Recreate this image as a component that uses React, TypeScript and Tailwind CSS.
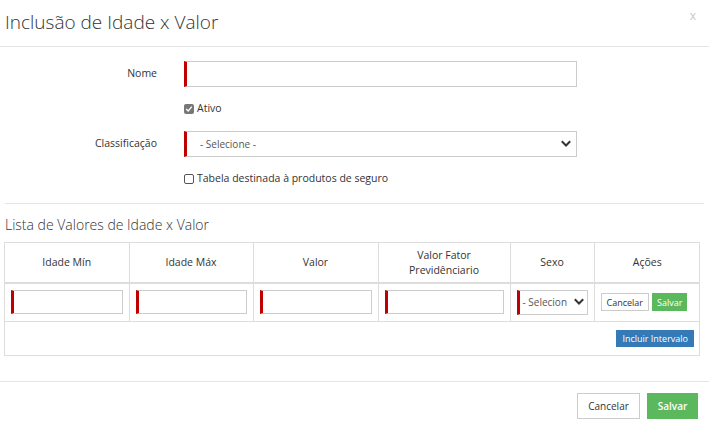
import { useState } from 'react';

function Chevron({ className = '' }: { className?: string }) {
  return (
    <svg viewBox="0 0 10 10" className={className} fill="none">
      <polyline points="1.5,3 5,6.5 8.5,3" stroke="#333" strokeWidth="2" strokeLinecap="square" />
    </svg>
  );
}

function ReqInput({ className = '' }: { className?: string }) {
  return (
    <input
      type="text"
      className={`h-[24px] border border-[#ccc] border-l-[3px] border-l-[#c00000] bg-white outline-none ${className}`}
    />
  );
}

export default function App() {
  const [ativo, setAtivo] = useState(true);
  const [seguro, setSeguro] = useState(false);

  const cols = [
    { label: 'Idade Mín', w: 'w-[124px]' },
    { label: 'Idade Máx', w: 'w-[124px]' },
    { label: 'Valor', w: 'w-[125px]' },
    { label: 'Valor Fator Previdênciario', w: 'w-[132px]' },
    { label: 'Sexo', w: 'w-[84px]' },
    { label: 'Ações', w: 'w-[106px]' },
  ];

  return (
    <div className="w-[709px] h-[429px] bg-white text-[#333] font-['Open_Sans',sans-serif] overflow-hidden">
      {/* Header */}
      <div className="h-[47px] border-b border-[#e5e5e5] flex items-center justify-between pl-[5px] pr-[13px]">
        <h4 className="text-[19px] font-light text-[#333] leading-none pb-[2px]">Inclusão de Idade x Valor</h4>
        <span className="text-[12px] text-[#c8c8c8] leading-none -mt-[15px]">x</span>
      </div>

      {/* Form */}
      <div className="pt-[14px]">
        <div className="flex items-center h-[26px]">
          <label className="w-[157px] text-right text-[10.5px] text-[#333]">Nome</label>
          <ReqInput className="ml-[27px] w-[393px] h-[26px]" />
        </div>

        <div className="flex items-center h-[14px] mt-[15px] ml-[184px] gap-[3px] text-[10.5px]">
          <button
            onClick={() => setAtivo(!ativo)}
            className={`w-[10px] h-[10px] rounded-[2px] flex items-center justify-center ${ativo ? 'bg-[#777]' : 'border border-[#777]'}`}
          >
            {ativo && (
              <svg viewBox="0 0 10 10" className="w-[8px] h-[8px]">
                <polyline points="1.5,5 4,7.5 8.5,2" fill="none" stroke="#fff" strokeWidth="1.6" />
              </svg>
            )}
          </button>
          <span>Ativo</span>
        </div>

        <div className="flex items-center h-[26px] mt-[15px]">
          <label className="w-[157px] text-right text-[10.5px] text-[#333]">Classificação</label>
          <div className="ml-[27px] w-[393px] h-[26px] border border-[#ccc] border-l-[3px] border-l-[#c00000] flex items-center justify-between pl-[13px] pr-[5px]">
            <span className="text-[10px] text-[#555]">- Selecione -</span>
            <Chevron className="w-[10px] h-[10px]" />
          </div>
        </div>

        <div className="flex items-center h-[14px] mt-[15px] ml-[184px] gap-[3px] text-[10.5px]">
          <button
            onClick={() => setSeguro(!seguro)}
            className={`w-[10px] h-[10px] rounded-[2px] border ${seguro ? 'bg-[#777] border-[#777]' : 'border-[#555] bg-white'}`}
          />
          <span>Tabela destinada à produtos de seguro</span>
        </div>

        <div className="mx-[5px] mt-[17px] border-t border-[#e5e5e5]" />

        <h4 className="ml-[5px] mt-[11px] text-[14px] font-light leading-[20px] text-[#333]">Lista de Valores de Idade x Valor</h4>

        {/* Table */}
        <div className="ml-[4px] mt-[7px] w-[696px] border border-[#ddd]">
          <table className="w-full border-collapse table-fixed text-[10.5px]">
            <thead>
              <tr className="h-[40px] border-b-2 border-[#ddd]">
                {cols.map((c, i) => (
                  <th
                    key={c.label}
                    className={`${c.w} font-normal text-center leading-[15px] px-[6px] ${i < cols.length - 1 ? 'border-r border-[#ddd]' : ''}`}
                  >
                    {c.label === 'Valor Fator Previdênciario' ? (
                      <>
                        Valor Fator
                        <br />
                        Previdênciario
                      </>
                    ) : (
                      c.label
                    )}
                  </th>
                ))}
              </tr>
            </thead>
            <tbody>
              <tr className="h-[38px] border-b border-[#ddd]">
                {[0, 1, 2, 3].map((i) => (
                  <td key={i} className="border-r border-[#ddd] px-[6px]">
                    <ReqInput className="w-full" />
                  </td>
                ))}
                <td className="border-r border-[#ddd] px-[6px]">
                  <div className="h-[25px] border border-[#ccc] border-l-[3px] border-l-[#c00000] flex items-center justify-between pl-[3px] pr-[3px] overflow-hidden">
                    <span className="text-[10px] text-[#555] whitespace-nowrap">- Selecion</span>
                    <Chevron className="w-[10px] h-[10px] shrink-0" />
                  </div>
                </td>
                <td className="px-[6px]">
                  <div className="flex items-center gap-[3px]">
                    <button className="h-[18px] px-[5px] border border-[#ccc] bg-white text-[9px] text-[#333]">Cancelar</button>
                    <button className="h-[18px] px-[5px] bg-[#5cb85c] text-[9px] text-white">Salvar</button>
                  </div>
                </td>
              </tr>
              <tr className="h-[34px]">
                <td colSpan={6} className="text-right pr-[6px]">
                  <button className="h-[17px] px-[6px] bg-[#337ab7] text-[9px] text-white">Incluir Intervalo</button>
                </td>
              </tr>
            </tbody>
          </table>
        </div>

        {/* Footer */}
        <div className="mt-[25px] border-t border-[#e5e5e5] flex justify-end gap-[7px] pt-[11px] pr-[11px]">
          <button className="h-[26px] w-[63px] border border-[#ccc] bg-white text-[10px] text-[#333]">Cancelar</button>
          <button className="h-[26px] w-[51px] bg-[#5cb85c] text-[10px] text-white font-semibold">Salvar</button>
        </div>
      </div>
    </div>
  );
}
